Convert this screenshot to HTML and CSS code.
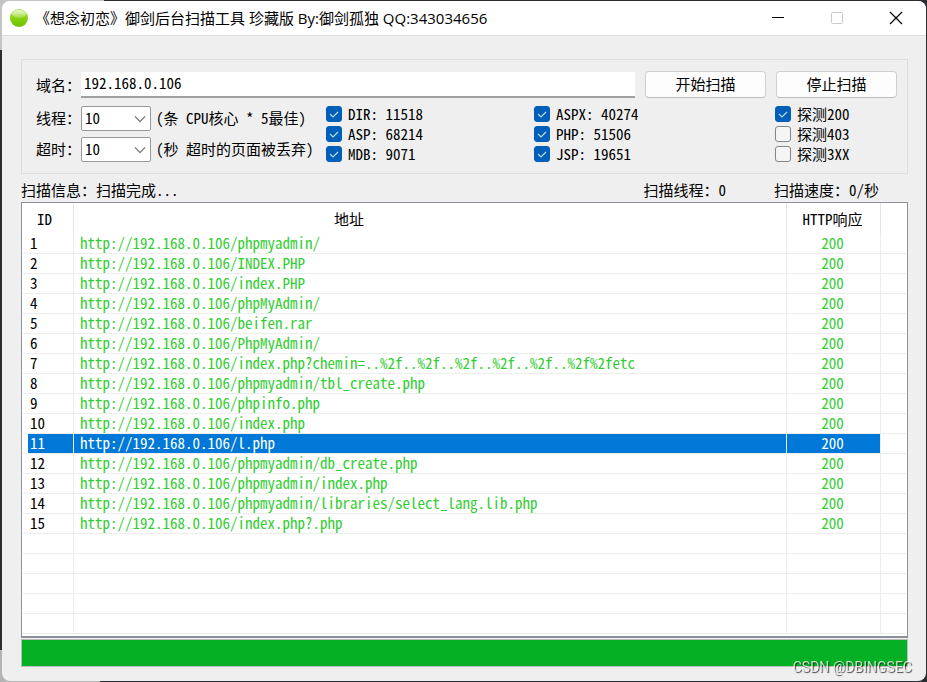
FILE: index.html
```html
<!DOCTYPE html>
<html lang="zh-CN">
<head>
  <meta charset="UTF-8">
  <title>御剑后台扫描工具</title>
  <link rel="stylesheet" href="styles.css">
</head>
<body>
  <div class="window">
    <header class="titlebar">
      <svg class="logo" viewBox="0 0 20 20">
        <defs>
          <linearGradient id="ball" x1="0" y1="0" x2="0" y2="1">
            <stop offset="0" stop-color="#a6e04a"/>
            <stop offset="0.55" stop-color="#84d20c"/>
            <stop offset="1" stop-color="#6cc000"/>
          </linearGradient>
          <linearGradient id="shine" x1="0" y1="0" x2="0" y2="1">
            <stop offset="0" stop-color="#fff" stop-opacity="0.75"/>
            <stop offset="1" stop-color="#fff" stop-opacity="0.15"/>
          </linearGradient>
        </defs>
        <circle cx="10" cy="10" r="9" fill="url(#ball)"/>
        <ellipse cx="10" cy="6" rx="7" ry="4" fill="url(#shine)"/>
      </svg>
      <h1>《想念初恋》御剑后台扫描工具 珍藏版 By:御剑孤独 QQ:343034656</h1>
      <div class="win-buttons">
        <button type="button" aria-label="最小化"><svg viewBox="0 0 14 14"><path d="M1 6.5h12" stroke="#000"/></svg></button>
        <button type="button" aria-label="最大化" disabled><svg viewBox="0 0 14 14"><rect x="1.5" y="1.5" width="11" height="11" rx="1" stroke="#c8c8c8"/></svg></button>
        <button type="button" aria-label="关闭"><svg viewBox="0 0 14 14"><path d="M1 1l12 12M13 1L1 13" stroke="#000" stroke-width="1.2"/></svg></button>
      </div>
    </header>

    <main>
      <form class="settings" autocomplete="off">
        <div class="domain-row">
          <label for="domain">域名：</label>
          <input type="text" id="domain" class="half" value="192.168.0.106">
          <button type="button">开始扫描</button>
          <button type="button">停止扫描</button>
        </div>
        <div class="options">
          <div class="limits">
            <div class="limit">
              <label for="threads">线程：</label>
              <select id="threads" class="half"><option>10</option></select>
              <span class="half">(条 CPU核心 * 5最佳)</span>
            </div>
            <div class="limit">
              <label for="timeout">超时：</label>
              <select id="timeout" class="half"><option>10</option></select>
              <span class="half">(秒 超时的页面被丢弃)</span>
            </div>
          </div>
          <div class="checks half">
            <label><input type="checkbox" checked>DIR: 11518</label>
            <label><input type="checkbox" checked>ASP: 68214</label>
            <label><input type="checkbox" checked>MDB: 9071</label>
          </div>
          <div class="checks half">
            <label><input type="checkbox" checked>ASPX: 40274</label>
            <label><input type="checkbox" checked>PHP: 51506</label>
            <label><input type="checkbox" checked>JSP: 19651</label>
          </div>
          <div class="checks half">
            <label><input type="checkbox" checked>探测200</label>
            <label><input type="checkbox">探测403</label>
            <label><input type="checkbox">探测3XX</label>
          </div>
        </div>
      </form>

      <div class="status">
        <span class="info">扫描信息：扫描完成<span class="half">...</span></span>
        <span>扫描线程：<span class="half">0</span></span>
        <span class="speed">扫描速度：<span class="half">0/秒</span></span>
      </div>

      <div class="list half">
        <table>
          <colgroup><col class="col-id"><col><col class="col-code"><col class="col-end"></colgroup>
          <thead>
            <tr><th>ID</th><th class="address">地址</th><th>HTTP响应</th><th></th></tr>
          </thead>
          <tbody>
            <tr><td>1</td><td>http://192.168.0.106/phpmyadmin/</td><td>200</td><td></td></tr>
            <tr><td>2</td><td>http://192.168.0.106/INDEX.PHP</td><td>200</td><td></td></tr>
            <tr><td>3</td><td>http://192.168.0.106/index.PHP</td><td>200</td><td></td></tr>
            <tr><td>4</td><td>http://192.168.0.106/phpMyAdmin/</td><td>200</td><td></td></tr>
            <tr><td>5</td><td>http://192.168.0.106/beifen.rar</td><td>200</td><td></td></tr>
            <tr><td>6</td><td>http://192.168.0.106/PhpMyAdmin/</td><td>200</td><td></td></tr>
            <tr><td>7</td><td>http://192.168.0.106/index.php?chemin=..%2f..%2f..%2f..%2f..%2f..%2f%2fetc</td><td>200</td><td></td></tr>
            <tr><td>8</td><td>http://192.168.0.106/phpmyadmin/tbl_create.php</td><td>200</td><td></td></tr>
            <tr><td>9</td><td>http://192.168.0.106/phpinfo.php</td><td>200</td><td></td></tr>
            <tr><td>10</td><td>http://192.168.0.106/index.php</td><td>200</td><td></td></tr>
            <tr class="selected"><td>11</td><td>http://192.168.0.106/l.php</td><td>200</td><td></td></tr>
            <tr><td>12</td><td>http://192.168.0.106/phpmyadmin/db_create.php</td><td>200</td><td></td></tr>
            <tr><td>13</td><td>http://192.168.0.106/phpmyadmin/index.php</td><td>200</td><td></td></tr>
            <tr><td>14</td><td>http://192.168.0.106/phpmyadmin/libraries/select_lang.lib.php</td><td>200</td><td></td></tr>
            <tr><td>15</td><td>http://192.168.0.106/index.php?.php</td><td>200</td><td></td></tr>
            <tr><td></td><td></td><td></td><td></td></tr>
            <tr><td></td><td></td><td></td><td></td></tr>
            <tr><td></td><td></td><td></td><td></td></tr>
            <tr><td></td><td></td><td></td><td></td></tr>
            <tr><td></td><td></td><td></td><td></td></tr>
          </tbody>
        </table>
      </div>

      <progress value="100" max="100" aria-label="扫描进度"></progress>
    </main>
  </div>
  <div class="watermark">CSDN @DBINGSEC</div>
</body>
</html>
```

FILE: styles.css
```css
* {
  box-sizing: border-box;
}
body {
  margin: 0;
  min-height: 100vh;
  padding: 1px 1px 1px 2px;
  display: flex;
  background:
    linear-gradient(#c4c4c4, #c4c4c4) 0 0 / 104px 50px no-repeat,
    linear-gradient(#b4b4b4, #b4b4b4) 0 100% / 100px 32px no-repeat,
    #2b2d31;
  font-family: "Noto Sans CJK SC", sans-serif;
  font-size: 15px;
  line-height: 20px;
  color: #000;
}
button, input, select {
  font: inherit;
  color: inherit;
}
/* half-width latin, two letters per hanzi */
.half {
  font-feature-settings: "hwid";
}

.window {
  flex: 1;
  display: flex;
  flex-direction: column;
  border-radius: 8px;
  overflow: hidden;
  background: #efefef;
}
.titlebar {
  display: flex;
  align-items: center;
  height: 35px;
  padding: 0 1px 0 7px;
  background: #fff;
  border-bottom: 1px solid #dedede;
}
.logo {
  width: 20px;
  height: 20px;
}
.titlebar h1 {
  flex: 1;
  margin: 0 0 0 6px;
  font: 400 15px/20px "Open Sans", "Noto Sans CJK SC", sans-serif;
  white-space: nowrap;
}
.win-buttons {
  display: flex;
  height: 100%;
}
.win-buttons button {
  display: flex;
  align-items: center;
  justify-content: center;
  width: 59px;
  padding: 0;
  border: none;
  background: none;
}
.win-buttons svg {
  width: 14px;
  height: 14px;
  fill: none;
}

main {
  flex: 1;
  display: flex;
  flex-direction: column;
  padding: 23px 18px 14px 19px;
}
.settings {
  padding: 11px 10px 9px 14px;
  border: 1px solid #dcdcdc;
}
.domain-row {
  display: flex;
  align-items: center;
  gap: 10px;
}
.domain-row label, .limit label {
  width: 45px;
}
.domain-row label {
  margin-right: -10px;
}
.domain-row input {
  flex: 1;
  min-width: 0;
  height: 26px;
  padding: 0 3px 2px;
  border: none;
  border-bottom: 2px solid #a0a0a0;
  background: #fff;
}
.domain-row button {
  width: 121px;
  height: 27px;
  padding: 0 0 2px;
  line-height: 20px;
  border: 1px solid #d0d0d0;
  border-bottom-color: #bcbcbc;
  border-radius: 4px;
  background: #fdfdfd;
}
.options {
  display: grid;
  grid-template-columns: 290px 208px 1fr 122px;
  margin-top: 6px;
}
.limits {
  padding-top: 2px;
}
.limit {
  display: flex;
  align-items: center;
  margin-bottom: 6px;
  line-height: 18px;
  white-space: nowrap;
}
.limit label, .limit span {
  padding-bottom: 2px;
}
.limit:last-child {
  margin-bottom: 0;
}
.limit select {
  appearance: none;
  width: 70px;
  height: 25px;
  margin-right: 5px;
  padding: 0 3px 2px;
  border: 1px solid #999;
  border-radius: 2px;
  background: #fff url("data:image/svg+xml,%3Csvg xmlns='http://www.w3.org/2000/svg' width='12' height='8' fill='none' stroke='%23808080' stroke-width='1.3'%3E%3Cpath d='M1 1.5l5 5 5-5'/%3E%3C/svg%3E") right 4px center no-repeat;
}
.checks label {
  display: flex;
  align-items: center;
  height: 20px;
}
.checks input {
  appearance: none;
  width: 16px;
  height: 16px;
  margin: 0 6px 0 0;
  border: 1px solid #868686;
  border-radius: 3px;
  background: #f5f5f5;
}
.checks input:checked {
  border-color: #005fb8;
  background: #005fb8 url("data:image/svg+xml,%3Csvg xmlns='http://www.w3.org/2000/svg' width='14' height='14' fill='none' stroke='%23b8d8f4' stroke-width='1.2'%3E%3Cpath d='M3 7l3 3 5-5'/%3E%3C/svg%3E") center no-repeat;
}

.status {
  display: flex;
  align-items: center;
  height: 28px;
  padding-top: 3px;
}
.status .info {
  flex: 1;
}
.status .speed {
  width: 134px;
  margin-left: 48px;
}

.list {
  flex: 1;
  padding: 0 1px;
  border: 1px solid #8c919b;
  border-bottom-width: 2px;
  background: #fff;
}
.list table {
  width: 100%;
  table-layout: fixed;
  border-collapse: separate;
  border-spacing: 0;
}
.col-id {
  width: 51px;
}
.col-code {
  width: 94px;
}
.col-end {
  width: 25px;
}
.list th {
  height: 31px;
  padding: 0 2px 0 0;
  font-weight: 400;
  border-right: 1px solid #e5e5e5;
}
.list th:first-child {
  padding-right: 7px;
}
.list .address {
  padding-right: 162px;
}
.list td {
  height: 20px;
  padding: 0 6px 2px;
  line-height: 17px;
  color: #32cd32;
  border-right: 1px solid #ececec;
  border-bottom: 1px solid #ececec;
  white-space: nowrap;
}
.list td:first-child {
  padding-left: 7px;
  color: #000;
}
.list td:nth-child(3) {
  text-align: center;
  padding-right: 8px;
}
.list th:last-child, .list td:last-child {
  padding: 0;
  border-right: none;
}
.list .selected td {
  color: #fff;
  background: #0078d7;
  background-clip: padding-box;
}
.list .selected td:first-child {
  background: linear-gradient(to right, #fff 5px, #0078d7 5px) padding-box;
}
.list .selected td:last-child {
  background: none;
}

progress {
  appearance: none;
  display: block;
  width: 100%;
  height: 28px;
  margin-top: 1px;
  border: 1px solid #bcbcbc;
  background: #e6e6e6;
}
progress::-webkit-progress-bar {
  background: #e6e6e6;
}
progress::-webkit-progress-value {
  background: #06b025;
}

.watermark {
  position: fixed;
  right: 15px;
  bottom: 6px;
  font: 14px/18px Roboto, sans-serif;
  color: rgba(255, 255, 255, 0.75);
  text-shadow: 1px 1px 1px rgba(0, 0, 0, 0.7);
}
```
